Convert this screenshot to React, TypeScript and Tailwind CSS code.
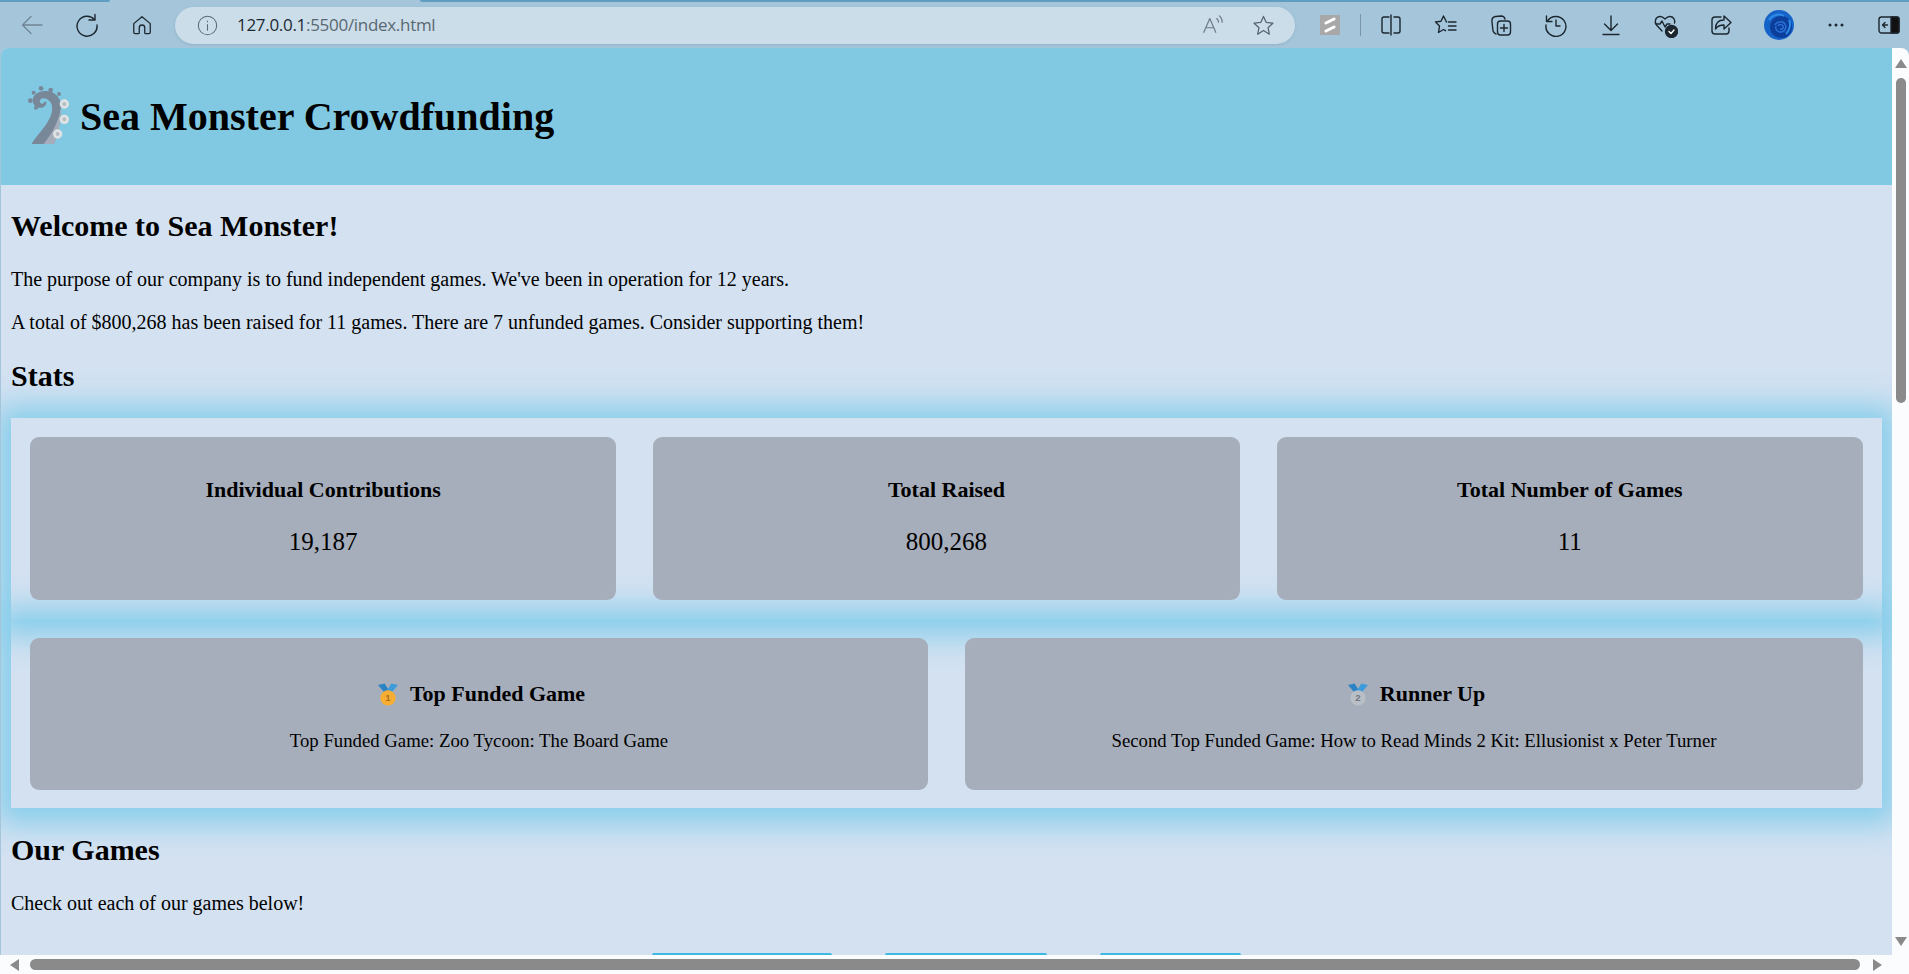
import React from "react";

function Ico({ children, size = 24 }: { children: React.ReactNode; size?: number }) {
  return (
    <svg width={size} height={size} viewBox="0 0 24 24" fill="none" stroke="#1c2730" strokeWidth={1.4} strokeLinecap="round" strokeLinejoin="round">
      {children}
    </svg>
  );
}

function Btn({ children }: { children: React.ReactNode }) {
  return <div className="w-[55px] h-[46px] flex items-center justify-center shrink-0">{children}</div>;
}

function Tentacle() {
  return (
    <svg width="46" height="62" viewBox="50 42 138 186" className="shrink-0 mb-[3px]">
      <g fill="#788899">
        <circle cx="92" cy="55" r="7" />
        <circle cx="121" cy="60" r="7" />
        <circle cx="146" cy="72" r="6" />
        <circle cx="70" cy="68" r="6" />
        <circle cx="60" cy="92" r="7" />
        <circle cx="77" cy="113" r="6" />
      </g>
      <path d="M64 222 C70 208 86 192 102 170 C118 150 128 128 125 108 C122 94 110 84 97 85 C88 87 86 96 92 100 C96 103 101 100 101 95 L108 95 C110 106 98 116 85 113 C72 110 64 98 68 84 C74 66 98 60 116 64 C138 68 152 88 152 108 C152 125 146 145 138 165 L120 222 Z" fill="#788899" />
      <path d="M152 112 C153 150 146 190 132 222 L100 222 C126 190 148 150 152 112 Z" fill="#a5acbb" />
      <g fill="#b7bcc4" stroke="#dfe3e3" strokeWidth="8">
        <circle cx="162" cy="102" r="10" />
        <circle cx="162" cy="148" r="10" />
        <circle cx="142" cy="192" r="10" />
      </g>
    </svg>
  );
}

function Medal({ gold }: { gold: boolean }) {
  return (
    <svg width="20" height="23" viewBox="0 0 21 23" className="shrink-0 ml-[5px]">
      <path d="M0 1.500 L7 0 L12 8 L8 11 Z" fill="#2b83c6" />
      <path d="M21 1.500 L14 0 L9 8 L13 11 Z" fill="#3e9bdb" />
      <circle cx="10.500" cy="15" r="8" fill={gold ? "#f7ae33" : "#b9bfc6"} />
      <text x="10.500" y="18.500" textAnchor="middle" fontSize="10" fontFamily="'Liberation Sans', sans-serif" fill={gold ? "#a8701c" : "#6d747c"}>
        {gold ? "1" : "2"}
      </text>
    </svg>
  );
}

function StatCard({ title, value }: { title: string; value: string }) {
  return (
    <div className="h-[163px] rounded-[9px] bg-[#a7aebb] flex flex-col items-center pt-[39px]">
      <h3 className="text-[22px] font-bold leading-[28px] text-black">{title}</h3>
      <p className="mt-[23px] text-[25px] leading-[30px] text-black">{value}</p>
    </div>
  );
}

function FeatureCard({ gold, title, text }: { gold: boolean; title: string; text: string }) {
  return (
    <div className="h-[152px] rounded-[9px] bg-[#a7aebb] flex flex-col items-center pt-[42px]">
      <h3 className="flex items-center gap-[12px] text-[22px] font-bold leading-[28px] text-black">
        <Medal gold={gold} />
        {title}
      </h3>
      <p className="mt-[21px] text-[18.750px] leading-[24px] text-black">{text}</p>
    </div>
  );
}

export default function App() {
  return (
    <div className="h-screen w-full overflow-hidden bg-[#a5c6da] flex flex-col">
      <div className="h-[2px] flex shrink-0">
        <div className="w-[110px] bg-[#5f9dc2] rounded-br-[2px]" />
        <div className="w-[310px]" />
        <div className="flex-1 bg-[#5f9dc2] rounded-bl-[2px]" />
      </div>
      <div className="h-[46px] flex items-center pl-[4px] shrink-0">
        <Btn>
          <svg width="24" height="24" viewBox="0 0 24 24" fill="none" stroke="#6f8494" strokeWidth="1.3" strokeLinecap="round" strokeLinejoin="round">
            <path d="M22 12H2.500M11 3.500 2.500 12l8.500 8.500" />
          </svg>
        </Btn>
        <Btn>
          <Ico>
            <path d="M19.500 6.500A10 10 0 1 0 22 12" />
            <path d="M20 1.500v5.500h-6" />
          </Ico>
        </Btn>
        <Btn>
          <Ico size={22}>
            <path d="M3 10.500 12 3l9 7.500V20a1.500 1.500 0 0 1-1.500 1.500H16a1 1 0 0 1-1-1V15a3 3 0 0 0-6 0v5.500a1 1 0 0 1-1 1H4.500A1.500 1.500 0 0 1 3 20Z" />
          </Ico>
        </Btn>
        <div className="ml-[6px] w-[1120px] h-[37px] rounded-full bg-[#cbdde9] shadow-[0_1px_3px_rgba(80,120,150,0.25)] flex items-center pl-[22px] pr-[20px] shrink-0">
          <svg width="21" height="21" viewBox="0 0 24 24" fill="none" stroke="#5c6a75" strokeWidth="1.2" strokeLinecap="round">
            <circle cx="12" cy="12" r="10.500" />
            <path d="M12 11v6.500M12 7v.6" />
          </svg>
          <span className="ml-[19px] text-[17px] tracking-[-0.3px] text-[#1d2a33] font-['Open_Sans','Noto_Sans',sans-serif]">
            127.0.0.1<span className="text-[#5a6872]">:5500/index.html</span>
          </span>
          <div className="ml-auto flex items-center gap-[28px]">
            <svg width="22" height="22" viewBox="0 0 24 24" fill="none" stroke="#6d7a84" strokeWidth="1.3" strokeLinecap="round" strokeLinejoin="round">
              <path d="M2 20 8.500 5 15 20M4.500 15h8" />
              <path d="M16 5a5 5 0 0 1 2 4M19 2a9 9 0 0 1 3 7" />
            </svg>
            <svg width="23" height="23" viewBox="0 0 24 24" fill="none" stroke="#56636d" strokeWidth="1.3" strokeLinejoin="round">
              <path d="M12 2.500l2.900 6.300 6.900.8-5.100 4.700 1.400 6.800L12 17.200l-6.100 3.900 1.400-6.800L2.200 9.600l6.900-.8Z" />
            </svg>
          </div>
        </div>
        <div className="ml-[25px] w-[20px] h-[20px] bg-[#a8a8a8] flex items-center justify-center shrink-0">
          <svg width="14" height="16" viewBox="0 0 14 16" fill="none" stroke="#fff" strokeWidth="3" strokeLinecap="round">
            <path d="M3 6 11 2M3 14l8-4" />
          </svg>
        </div>
        <div className="ml-[20px] mr-[2px] w-[1px] h-[22px] bg-[#7a95a8] shrink-0" />
        <Btn>
          <Ico>
            <path d="M10 4H5a2 2 0 0 0-2 2v12a2 2 0 0 0 2 2h5M15 4h4a2 2 0 0 1 2 2v12a2 2 0 0 1-2 2h-4M12 2v20" />
          </Ico>
        </Btn>
        <Btn>
          <Ico>
            <path d="M12.500 9 9.500 3 7 8.300 1.500 9l4 4-1 6.500 5-3 2 1.200" />
            <path d="M14.500 9h7.500M14.500 13h7.500M14.500 17h7.500" />
          </Ico>
        </Btn>
        <Btn>
          <Ico>
            <path d="M7 21c-1.500-.5-2.500-1.500-3-3L3 9c-.5-3 1-5 3.500-5.500L12 3c2 0 3.500 1 4 3" />
            <rect x="8.500" y="8" width="13" height="14" rx="3" />
            <path d="M15 11.500v7M11.500 15h7" />
          </Ico>
        </Btn>
        <Btn>
          <Ico>
            <path d="M3.500 8A10 10 0 1 1 2 12" />
            <path d="M2.500 3v5.500H8M12 7v6h4" />
          </Ico>
        </Btn>
        <Btn>
          <Ico>
            <path d="M12 3v14M5.500 11l6.500 6.500 6.500-6.500M4 21.500h16" />
          </Ico>
        </Btn>
        <Btn>
          <svg width="25" height="25" viewBox="0 0 25 25" fill="none" stroke="#1c2730" strokeWidth="1.4" strokeLinecap="round" strokeLinejoin="round">
            <path d="M9 18 3.500 12C1 9 2.500 4 6.500 3.500 9 3 10.500 4.500 12 6c1.500-1.500 3-3 5.500-2.500 3 .5 5 3.500 4 6.500" />
            <path d="M3 11h4l2-3 3 6 2-3h3" />
            <circle cx="18.500" cy="18.500" r="6" fill="#1c2730" />
            <path d="M16 18.500l2 2 3-3.500" stroke="#fff" />
          </svg>
        </Btn>
        <Btn>
          <Ico>
            <path d="M12 4H6a3 3 0 0 0-3 3v11a3 3 0 0 0 3 3h11a3 3 0 0 0 3-3v-3" />
            <path d="M15 3l7 6.500-7 6.500v-4c-4 0-6.500 1-8.500 4 0-5.500 3-9 8.500-9Z" />
          </Ico>
        </Btn>
        <div className="w-[55px] h-[46px] ml-[3px] flex items-center justify-center shrink-0">
          <svg width="30" height="30" viewBox="0 0 30 30">
            <circle cx="15" cy="15" r="15" fill="#1562c9" />
            <circle cx="17" cy="17" r="11" fill="#0c3e9c" />
            <path d="M11 15c2-4 8-4 10-1s0 8-4 8-6-3-5-6M14 16c1-2 4-2 5 0s-1 4-3 3" fill="none" stroke="#2a6fd6" strokeWidth="1.500" />
            <path d="M5 10c3-5 10-7 15-4M25 10c2 4 1 10-3 14" fill="none" stroke="#2e8ae6" strokeWidth="2" />
          </svg>
        </div>
        <div className="w-[55px] h-[46px] ml-[2px] flex items-center justify-center shrink-0">
          <svg width="18" height="6" viewBox="0 0 18 6" fill="#1c2730">
            <circle cx="3" cy="3" r="1.500" />
            <circle cx="9" cy="3" r="1.500" />
            <circle cx="15" cy="3" r="1.500" />
          </svg>
        </div>
        <div className="w-[52px] h-[46px] flex items-center justify-center shrink-0">
          <svg width="22" height="20" viewBox="0 0 22 20" fill="none" stroke="#1c2730" strokeWidth="1.4" strokeLinecap="round" strokeLinejoin="round">
            <rect x="1" y="2" width="20" height="16" rx="2.500" />
            <path d="M13 2h6a2 2 0 0 1 2 2v12a2 2 0 0 1-2 2h-6Z" fill="#111" />
            <path d="M9.500 10H5M7 7.500 4.500 10 7 12.500" />
          </svg>
        </div>
      </div>

      <div className="flex-1 min-h-0 flex">
        <main className="flex-1 min-w-0 overflow-hidden rounded-tl-[8px] ml-[1px] bg-[#d3e1f1] font-['Liberation_Serif',serif] text-black">
          <header className="h-[137px] bg-[#81c9e2] flex items-center pl-[26px] gap-[7px]">
            <Tentacle />
            <h1 className="text-[40px] font-bold leading-[48px]">Sea Monster Crowdfunding</h1>
          </header>
          <div className="px-[10px]">
            <h2 className="mt-[24px] text-[30px] font-bold leading-[34px]">Welcome to Sea Monster!</h2>
            <p className="mt-[24px] text-[20px] leading-[24px]">The purpose of our company is to fund independent games. We've been in operation for 12 years.</p>
            <p className="mt-[19px] text-[20px] leading-[24px]">A total of $800,268 has been raised for 11 games. There are 7 unfunded games. Consider supporting them!</p>
            <h2 className="mt-[25px] text-[30px] font-bold leading-[34px]">Stats</h2>
            <section className="mt-[25px]">
              <div className="grid grid-cols-3 gap-[37px] px-[19px] pt-[19px] pb-[20px] shadow-[0_2px_28px_14px_#87ceeb]">
                <StatCard title="Individual Contributions" value="19,187" />
                <StatCard title="Total Raised" value="800,268" />
                <StatCard title="Total Number of Games" value="11" />
              </div>
              <div className="grid grid-cols-2 gap-[37px] px-[19px] py-[18px] shadow-[0_2px_28px_14px_#87ceeb]">
                <FeatureCard gold title="Top Funded Game" text="Top Funded Game: Zoo Tycoon: The Board Game" />
                <FeatureCard gold={false} title="Runner Up" text="Second Top Funded Game: How to Read Minds 2 Kit: Ellusionist x Peter Turner" />
              </div>
            </section>
            <h2 className="mt-[25px] text-[30px] font-bold leading-[34px]">Our Games</h2>
            <p className="mt-[24px] text-[20px] leading-[24px]">Check out each of our games below!</p>
            <div className="mt-[38px] flex ml-[641px]">
              <div className="w-[180px] h-[40px] rounded-t-[2px] bg-[#3cb9e0]" />
              <div className="ml-[53px] w-[162px] h-[40px] rounded-t-[2px] bg-[#3cb9e0]" />
              <div className="ml-[53px] w-[141px] h-[40px] rounded-t-[2px] bg-[#3cb9e0]" />
            </div>
          </div>
        </main>
        <div className="w-[17px] bg-[#fbfcfd] rounded-tr-[8px] shrink-0 flex flex-col items-center pt-[11px]">
          <svg width="12" height="9" viewBox="0 0 12 9" fill="#8a8a8a"><path d="M6 0l6 9H0Z" /></svg>
          <div className="mt-[10px] w-[10px] h-[325px] rounded-full bg-[#8a8a8a]" />
          <svg className="mt-auto mb-[9px]" width="12" height="9" viewBox="0 0 12 9" fill="#8a8a8a"><path d="M0 0h12L6 9Z" /></svg>
        </div>
      </div>
      <div className="h-[19px] bg-[#fbfcfd] flex items-center pl-[10px] shrink-0">
        <svg width="9" height="12" viewBox="0 0 9 12" fill="#8a8a8a"><path d="M9 0v12L0 6Z" /></svg>
        <div className="ml-[11px] w-[1830px] h-[11px] rounded-full bg-[#8a8a8a]" />
        <svg className="ml-[13px]" width="9" height="12" viewBox="0 0 9 12" fill="#8a8a8a"><path d="M0 0l9 6-9 6Z" /></svg>
      </div>
    </div>
  );
}
